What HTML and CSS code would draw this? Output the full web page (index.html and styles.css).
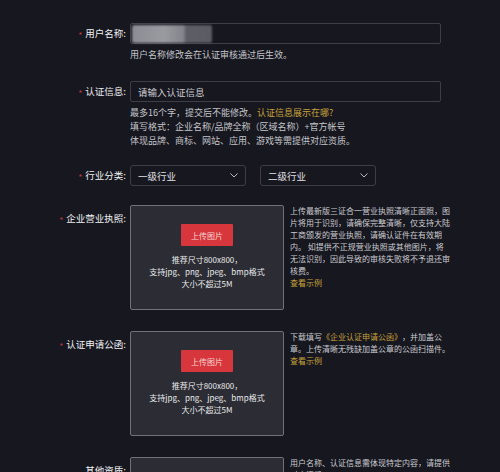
FILE: index.html
```html
<!DOCTYPE html>
<html lang="zh-CN">
<head>
<meta charset="utf-8">
<title>认证</title>
<link rel="stylesheet" href="styles.css">
</head>
<body>
<div class="form">
  <div class="row">
    <div class="label"><span class="req">*</span>用户名称:</div>
    <div class="control">
      <div class="input input-name"><div class="blur"></div></div>
      <p class="hint">用户名称修改会在认证审核通过后生效。</p>
    </div>
  </div>

  <div class="row row-info">
    <div class="label"><span class="req">*</span>认证信息:</div>
    <div class="control">
      <div class="input"><span class="placeholder">请输入认证信息</span></div>
      <div class="hints">
        <p>最多16个字，提交后不能修改。<span class="link">认证信息展示在哪?</span></p>
        <p>填写格式：企业名称/品牌全称（区域名称）+官方帐号</p>
        <p>体现品牌、商标、网站、应用、游戏等需提供对应资质。</p>
      </div>
    </div>
  </div>

  <div class="row">
    <div class="label"><span class="req">*</span>行业分类:</div>
    <div class="control selects">
      <div class="select"><span>一级行业</span><svg class="chev" width="8" height="5" viewBox="0 0 8 5"><polyline points="0.5,0.5 4,4 7.5,0.5" fill="none" stroke="#b9bac0" stroke-width="1"/></svg></div>
      <div class="select"><span>二级行业</span><svg class="chev" width="8" height="5" viewBox="0 0 8 5"><polyline points="0.5,0.5 4,4 7.5,0.5" fill="none" stroke="#b9bac0" stroke-width="1"/></svg></div>
    </div>
  </div>

  <div class="row row-upload">
    <div class="label"><span class="req">*</span>企业营业执照:</div>
    <div class="control upload-wrap">
      <div class="upload">
        <div class="btn">上传图片</div>
        <div class="tips">推荐尺寸800x800，<br>支持jpg、png、jpeg、bmp格式<br>大小不超过5M</div>
      </div>
      <div class="desc">上传最新版三证合一营业执照清晰正面照，图片将用于识别，请确保完整清晰，仅支持大陆工商颁发的营业执照，请确认证件在有效期内。 如提供不正规营业执照或其他图片，将无法识别，因此导致的审核失败将不予退还审核费。<br><span class="link">查看示例</span></div>
    </div>
  </div>

  <div class="row row-upload">
    <div class="label"><span class="req">*</span>认证申请公函:</div>
    <div class="control upload-wrap">
      <div class="upload">
        <div class="btn">上传图片</div>
        <div class="tips">推荐尺寸800x800，<br>支持jpg、png、jpeg、bmp格式<br>大小不超过5M</div>
      </div>
      <div class="desc">下载填写<span class="link">《企业认证申请公函》</span>，并加盖公章。上传清晰无残缺加盖公章的公函扫描件。<br><span class="link">查看示例</span></div>
    </div>
  </div>

  <div class="row row-upload">
    <div class="label">其他资质:</div>
    <div class="control upload-wrap">
      <div class="upload">
        <div class="btn">上传图片</div>
        <div class="tips">推荐尺寸800x800，<br>支持jpg、png、jpeg、bmp格式<br>大小不超过5M</div>
      </div>
      <div class="desc">用户名称、认证信息需体现特定内容，请提供对应资质。</div>
    </div>
  </div>
</div>
</body>
</html>
```
FILE: styles.css
```css
html, body {
  margin: 0;
  background: #16171f;
}
body {
  font-family: "Noto Sans CJK SC", "Noto Sans", sans-serif;
  color: #e6e6e8;
  overflow: hidden;
  text-spacing-trim: space-all;
}
.form {
  padding-top: 23px;
}
.row {
  display: flex;
  gap: 4px;
  margin-bottom: 19px;
}
.row-info {
  margin-bottom: 17px;
}
.row-upload {
  margin-bottom: 21px;
}
.label {
  width: 126px;
  flex-shrink: 0;
  text-align: right;
  font-size: 9.5px;
  line-height: 21px;
  color: #f1f1f3;
  white-space: nowrap;
}
.row-upload .label {
  padding-top: 3px;
}
.req {
  color: #b8343c;
  font-size: 9px;
  line-height: 0;
  margin-right: 3px;
  vertical-align: -2px;
}
.input {
  width: 311px;
  height: 21px;
  box-sizing: border-box;
  border: 1px solid #3d3e47;
  border-radius: 2px;
  display: flex;
  align-items: center;
  padding: 0 7px;
  font-size: 9.5px;
}
.input-name {
  padding: 0 1px;
}
.blur {
  width: 80px;
  height: 18px;
  border-radius: 2px;
  background: linear-gradient(to right, #8c8d94 0, #9a9ba1 40%, #83848b 65%, #5d5e66 67%, #5a5b63 100%);
  filter: blur(1.2px);
}
.placeholder {
  color: #c9c9cd;
}
.hint {
  margin: 4px 0 0;
  font-size: 9px;
  line-height: 14px;
  color: #c5c5ca;
}
.hints {
  margin-top: 4px;
  font-size: 9px;
  line-height: 14px;
  color: #c5c5ca;
}
.hints p {
  margin: 0;
}
.link {
  color: #c8a23c;
}
.selects {
  display: flex;
  gap: 14px;
}
.select {
  width: 116px;
  height: 21px;
  box-sizing: border-box;
  border: 1px solid #3d3e47;
  border-radius: 3px;
  display: flex;
  align-items: center;
  justify-content: space-between;
  padding: 0 7px;
  font-size: 9.5px;
  color: #e2e2e5;
}
.chev {
  display: block;
}
.upload-wrap {
  display: flex;
  align-items: flex-start;
}
.upload {
  width: 154px;
  flex-shrink: 0;
  box-sizing: border-box;
  border: 1px solid #717278;
  border-radius: 2px;
  background: #2c2d34;
  display: flex;
  flex-direction: column;
  align-items: center;
  padding: 18px 0 19px;
}
.btn {
  width: 52px;
  height: 22px;
  background: #d7373c;
  color: #f6d3d3;
  font-size: 8px;
  display: flex;
  align-items: center;
  justify-content: center;
  border-radius: 1px;
}
.tips {
  margin-top: 8px;
  font-size: 8px;
  line-height: 12px;
  text-align: center;
  color: #e9e9eb;
  white-space: nowrap;
}
.desc {
  width: 161px;
  margin-left: 6px;
  font-size: 8px;
  line-height: 12px;
  color: #cbcbcf;
}
```
